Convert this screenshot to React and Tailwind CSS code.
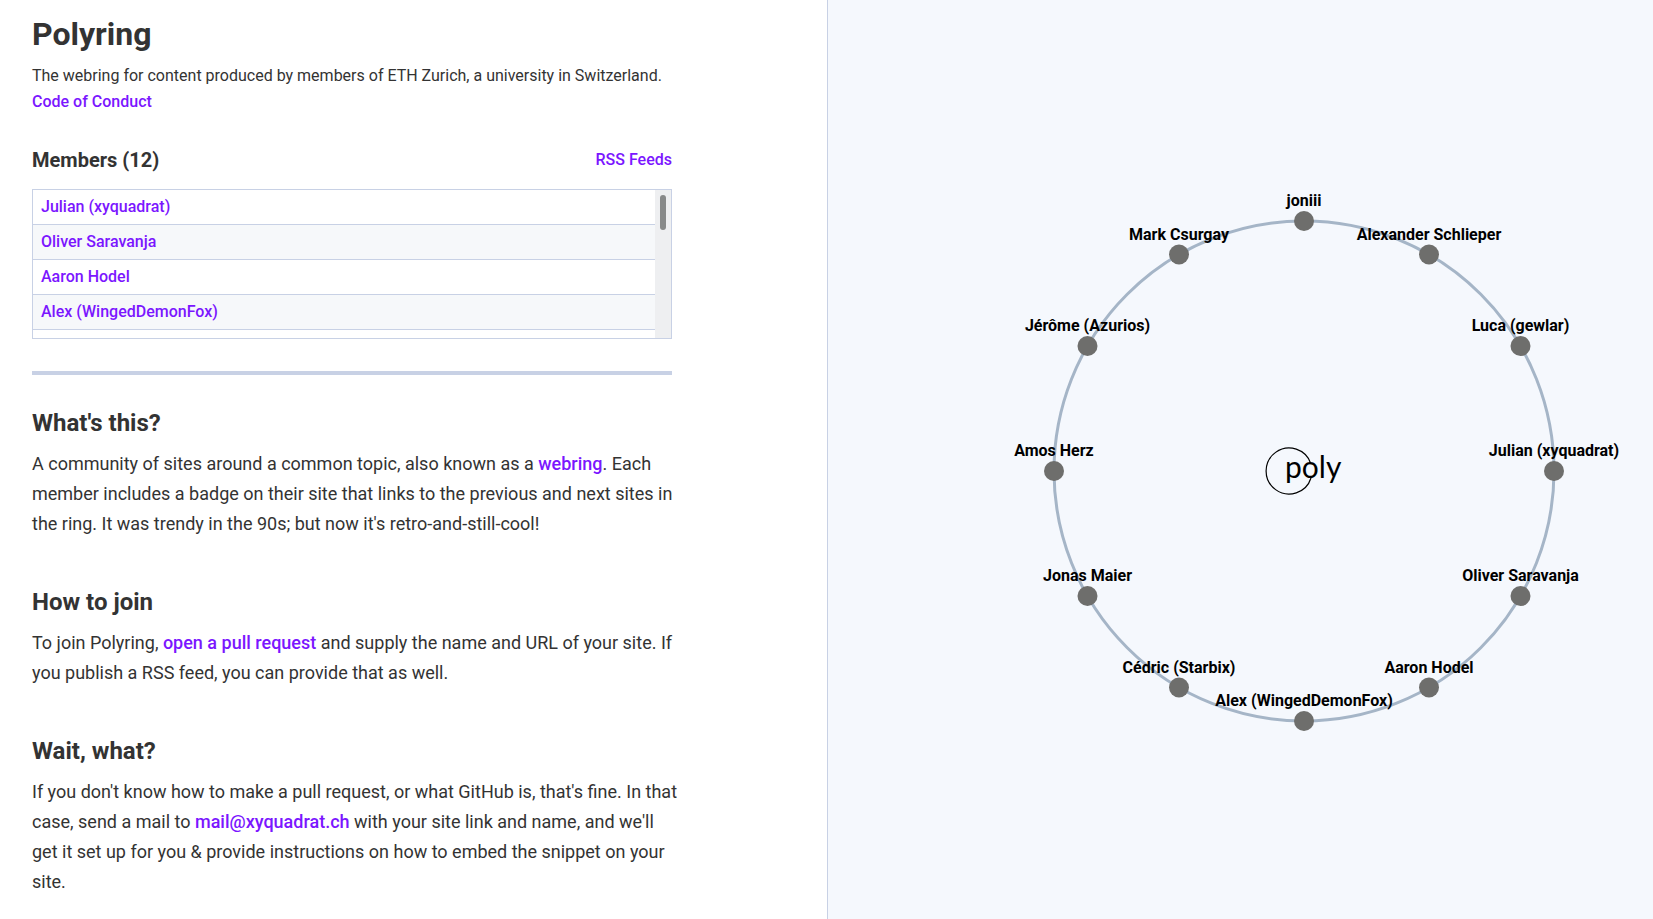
const link = "font-medium text-[#7b16ff] hover:underline";

const members = [
  "Julian (xyquadrat)",
  "Oliver Saravanja",
  "Aaron Hodel",
  "Alex (WingedDemonFox)",
  "Cédric (Starbix)",
  "Jonas Maier",
  "Amos Herz",
  "Jérôme (Azurios)",
  "Mark Csurgay",
  "joniii",
  "Alexander Schlieper",
  "Luca (gewlar)",
];

function MemberList() {
  return (
    <div className="flex h-[150px] border border-[#c8d1e5]">
      <ul className="flex-1 overflow-y-auto [scrollbar-width:none]">
        {members.map((name) => (
          <li key={name} className="border-b border-[#c8d1e5] px-2 py-[5px] leading-6 even:bg-[#f6f8fa]">
            <a href="#member" className={link}>{name}</a>
          </li>
        ))}
      </ul>
      <div className="w-4 bg-[#eeeff1] p-[5px]" aria-hidden="true">
        <div className="h-[35px] w-[6px] rounded-full bg-[#888a8a]" />
      </div>
    </div>
  );
}

function Section({ title, children }) {
  return (
    <section className="-mr-2 mb-[45px]">
      <h2 className="mb-2 text-2xl leading-9 font-bold">{title}</h2>
      <p className="text-lg leading-[30px]">{children}</p>
    </section>
  );
}

function Ring() {
  return (
    <svg viewBox="-349 -349 698 698" className="w-[698px] max-w-full" role="img" aria-label="Ring of member sites">
      <circle r="250" fill="none" stroke="#a5b5c7" strokeWidth="3" />
      {members.map((name, i) => {
        const angle = (i * Math.PI) / 6;
        const x = 250 * Math.cos(angle);
        const y = 250 * Math.sin(angle);
        return (
          <g key={name}>
            <circle cx={x} cy={y} r="10" fill="#6e6e6c" />
            <text x={x} y={y - 15} textAnchor="middle" className="fill-black text-base font-bold">{name}</text>
          </g>
        );
      })}
      <path d="M 7 -7 A 23 23 0 1 0 7 7" fill="none" stroke="#000" strokeWidth="1.2" />
      <text x="-19" y="7" fill="#000" fontSize="30" className="font-['Lato']">poly</text>
    </svg>
  );
}

export default function App() {
  return (
    <div className="grid min-h-screen grid-cols-2 bg-white font-['Roboto',sans-serif] text-[#333]">
      <main className="px-8 pt-3">
        <div className="max-w-[640px]">
          <h1 className="mb-[7px] text-[32px] leading-[44px] font-bold">Polyring</h1>
          <p className="leading-[26px]">The webring for content produced by members of ETH Zurich, a university in Switzerland.</p>
          <p className="leading-[26px]"><a href="#conduct" className={link}>Code of Conduct</a></p>
          <div className="mt-[29px] mb-[13px] flex items-center justify-between">
            <h3 className="text-xl leading-8 font-bold">Members (12)</h3>
            <a href="#feeds" className={link}>RSS Feeds</a>
          </div>
          <MemberList />
          <hr className="mt-8 mb-[30px] border-t-4 border-[#c8d1e5]" />
          <Section title="What's this?">
            A community of sites around a common topic, also known as a <a href="#webring" className={link}>webring</a>. Each
            member includes a badge on their site that links to the previous and next sites in the ring. It was trendy in the
            90s; but now it's retro-and-still-cool!
          </Section>
          <Section title="How to join">
            To join Polyring, <a href="#join" className={link}>open a pull request</a> and supply the name and URL of your
            site. If you publish a RSS feed, you can provide that as well.
          </Section>
          <Section title="Wait, what?">
            If you don't know how to make a pull request, or what GitHub is, that's fine. In that case, send a mail
            to <a href="mailto:mail@xyquadrat.ch" className={link}>mail@xyquadrat.ch</a> with your site link and name, and
            we'll get it set up for you &amp; provide instructions on how to embed the snippet on your site.
          </Section>
        </div>
      </main>
      <aside className="flex items-center justify-end border-l border-[#c8d1e5] bg-[#f5f8fd]">
        <Ring />
      </aside>
    </div>
  );
}
